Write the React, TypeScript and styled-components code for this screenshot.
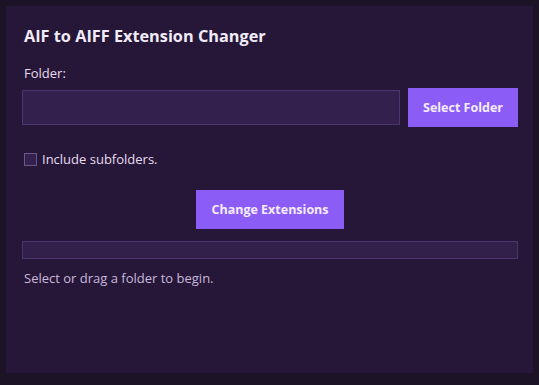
import styled, { createGlobalStyle } from "styled-components";

const GlobalStyle = createGlobalStyle`
  html, body {
    margin: 0;
    padding: 0;
    background: #1d1327;
  }
  * {
    box-sizing: border-box;
  }
`;

const App = () => {
  return (
    <>
      <GlobalStyle />
      <Page>
        <Panel>
          <Title>AIF to AIFF Extension Changer</Title>
          <Label>Folder:</Label>
          <FolderRow>
            <PathInput type="text" readOnly />
            <Button>Select Folder</Button>
          </FolderRow>
          <CheckRow>
            <CheckBox type="checkbox" />
            <span>Include subfolders.</span>
          </CheckRow>
          <Center>
            <Button>Change Extensions</Button>
          </Center>
          <Progress />
          <Status>Select or drag a folder to begin.</Status>
        </Panel>
      </Page>
    </>
  );
};

export default App;

const Page = styled.div`
  width: 539px;
  height: 385px;
  padding: 6px 6px 12px 6px;
  font-family: "Open Sans", "Noto Sans", sans-serif;
`;

const Panel = styled.div`
  height: 100%;
  background: #261738;
  padding: 21px 15px 0 16px;
  display: flex;
  flex-direction: column;
`;

const Title = styled.h1`
  margin: 0;
  font-size: 16.3px;
  font-weight: 700;
  color: #f1ebf7;
  line-height: 18px;
  padding-left: 2px;
`;

const Label = styled.div`
  margin-top: 20px;
  font-size: 13px;
  color: #e6dcef;
  line-height: 16px;
  padding-left: 2px;
`;

const FolderRow = styled.div`
  margin-top: 7px;
  display: flex;
  align-items: center;
  gap: 8px;
`;

const PathInput = styled.input`
  flex: 1;
  height: 35px;
  background: #33204d;
  border: 1px solid #4d3572;
  outline: none;
  margin: 0;
  padding: 0 8px;
  color: #f1ebf7;
`;

const Button = styled.button`
  height: 39px;
  padding: 0 15px;
  border: none;
  background: #8b5cf6;
  color: #f5ecff;
  font-family: "Open Sans", "Noto Sans", sans-serif;
  font-weight: 700;
  font-size: 12.5px;
  cursor: pointer;
`;

const CheckRow = styled.label`
  margin-top: 24px;
  display: flex;
  align-items: center;
  gap: 5px;
  font-size: 13px;
  line-height: 16px;
  color: #e6dcef;
`;

const CheckBox = styled.input`
  appearance: none;
  width: 13px;
  height: 13px;
  margin: 0 0 0 2px;
  background: #33204d;
  border: 1px solid #6a5688;
`;

const Center = styled.div`
  margin-top: 23px;
  display: flex;
  justify-content: center;
`;

const Progress = styled.div`
  margin-top: 12px;
  height: 18px;
  background: #33204a;
  border: 1px solid #4d3572;
`;

const Status = styled.div`
  margin-top: 11px;
  font-size: 13px;
  line-height: 16px;
  color: #c9b8db;
  padding-left: 2px;
`;
